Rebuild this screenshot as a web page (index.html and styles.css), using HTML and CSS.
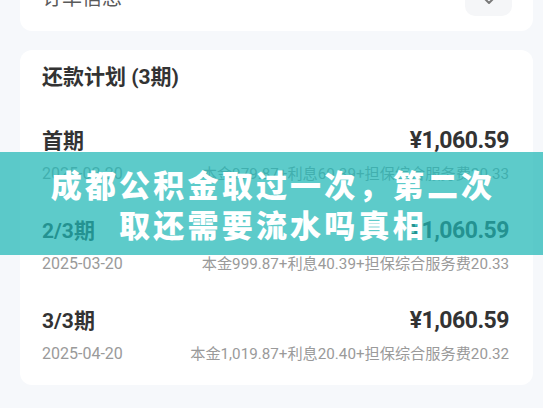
FILE: index.html
```html
<!DOCTYPE html>
<html lang="zh-CN">
<head>
<meta charset="utf-8">
<title>还款计划</title>
<link rel="stylesheet" href="styles.css">
</head>
<body>
<div class="page">
  <section class="card card-top">
    <div class="card-top-row">
      <span class="card-top-title">订单信息</span>
      <span class="toggle">
        <svg width="20" height="12" viewBox="0 0 20 12"><path d="M4 2 L10 8 L16 2" fill="none" stroke="#7a7a7a" stroke-width="2" stroke-linecap="round" stroke-linejoin="round"/></svg>
      </span>
    </div>
  </section>
  <section class="card plan">
    <h2 class="plan-title">还款计划 (3期)</h2>
    <div class="inst">
      <div class="inst-main"><span class="inst-name">首期</span><span class="inst-amt">¥1,060.59</span></div>
      <div class="inst-sub"><span class="inst-date">2025-02-20</span><span class="inst-detail">本金979.87+利息60.39+担保综合服务费20.33</span></div>
    </div>
    <div class="inst">
      <div class="inst-main"><span class="inst-name">2/3期</span><span class="inst-amt">¥1,060.59</span></div>
      <div class="inst-sub"><span class="inst-date">2025-03-20</span><span class="inst-detail">本金999.87+利息40.39+担保综合服务费20.33</span></div>
    </div>
    <div class="inst">
      <div class="inst-main"><span class="inst-name">3/3期</span><span class="inst-amt">¥1,060.59</span></div>
      <div class="inst-sub"><span class="inst-date">2025-04-20</span><span class="inst-detail">本金1,019.87+利息20.40+担保综合服务费20.32</span></div>
    </div>
  </section>
</div>
<div class="banner">
  <p class="banner-text">成都公积金取过一次，第二次<br>取还需要流水吗真相</p>
</div>
</body>
</html>
```
FILE: styles.css
```css
html, body {
  margin: 0;
  padding: 0;
}
body {
  background: #f6f8fb;
  font-family: Roboto, "Noto Sans CJK SC", sans-serif;
  width: 543px;
  height: 408px;
  overflow: hidden;
}
.page {
  padding: 0 10px 0 20px;
}
.card {
  background: #ffffff;
  border-radius: 12px;
}
.card-top {
  margin-top: -40px;
  padding: 12px 21px 15px 22px;
}
.card-top-row {
  display: flex;
  justify-content: space-between;
  align-items: flex-start;
}
.card-top-title {
  margin-top: 12px;
  font-size: 20px;
  line-height: 28px;
  color: #5a5a5a;
}
.toggle {
  width: 47px;
  height: 44px;
  border-radius: 10px;
  background: #f5f6f8;
  display: flex;
  justify-content: center;
  align-items: flex-end;
  box-sizing: border-box;
}
.toggle svg {
  display: block;
  margin-bottom: 9px;
}
.plan {
  margin-top: 19px;
  padding: 12px 24px 20px 22px;
}
.plan-title {
  margin: 0 0 34px;
  font-size: 21px;
  line-height: 30px;
  font-weight: 700;
  color: #333333;
}
.inst + .inst {
  margin-top: 31px;
}
.inst-main {
  display: flex;
  justify-content: space-between;
  align-items: baseline;
  line-height: 30px;
  color: #333333;
}
.inst-name {
  font-size: 21px;
  font-weight: 700;
}
.inst-amt {
  font-size: 23px;
  font-weight: 700;
  letter-spacing: -0.5px;
}
.inst-sub {
  display: flex;
  justify-content: space-between;
  align-items: baseline;
  margin-top: 7px;
  line-height: 22px;
  color: #9a9a9a;
}
.inst-date {
  font-size: 16px;
}
.inst-detail {
  font-size: 15.2px;
}
.banner {
  position: absolute;
  left: 0;
  right: 0;
  top: 152px;
  height: 103px;
  background: rgba(30, 183, 181, 0.72);
  display: flex;
  align-items: center;
  justify-content: center;
}
.banner-text {
  margin: 0;
  padding-left: 3px;
  text-align: center;
  color: #ffffff;
  font-family: "Noto Sans CJK SC", sans-serif;
  font-size: 31px;
  line-height: 40px;
  font-weight: 900;
  letter-spacing: 3.2px;
}
```
